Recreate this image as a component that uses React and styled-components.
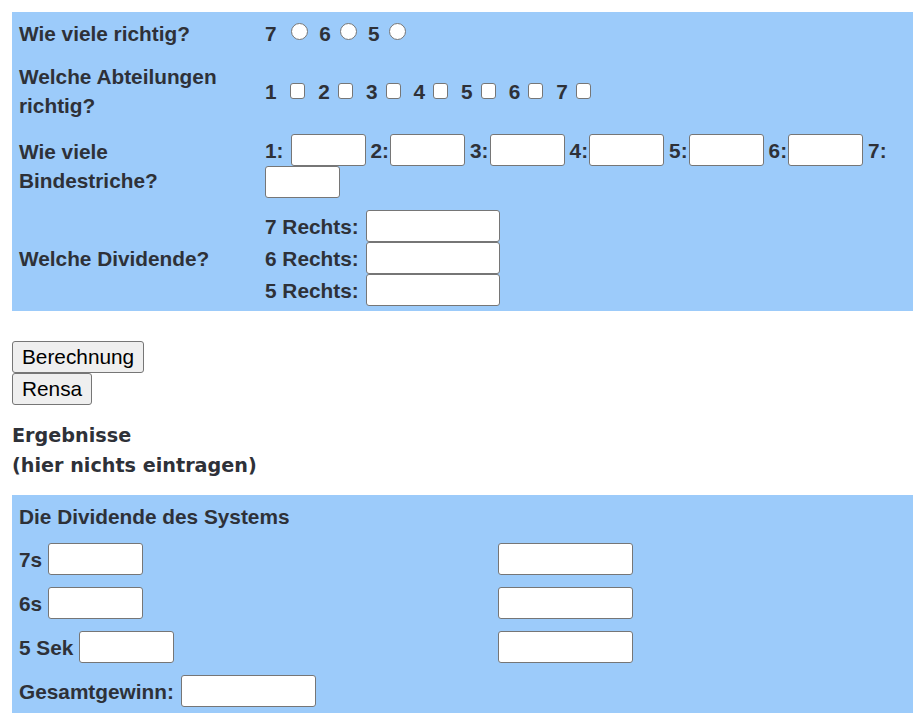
import React from 'react';
import styled, { createGlobalStyle } from 'styled-components';

const GlobalStyle = createGlobalStyle`
  body {
    margin: 0;
    background: #ffffff;
    font-family: 'Liberation Sans', Arial, sans-serif;
    color: #2e3138;
  }
`;

const Page = styled.div`
  padding: 12px;
`;

const Panel = styled.table`
  width: 901px;
  border-collapse: collapse;
  table-layout: fixed;
  background: #9ccbfa;
  font-size: 20.8px;
  font-weight: bold;
`;

const Cell = styled.td`
  padding: ${({ $py = 7 }) => `${$py}px 10px ${$py}px 7px`};
  line-height: 29px;
  vertical-align: middle;
  white-space: ${({ $nowrap }) => ($nowrap ? 'nowrap' : 'normal')};
`;

const Field = styled.input`
  box-sizing: border-box;
  width: ${({ $w }) => $w}px;
  height: 32px;
  margin: 0;
  padding: 1px 4px;
  border: 1px solid #767676;
  border-radius: 3px;
  background: #ffffff;
  font: 16px 'Liberation Sans', Arial, sans-serif;
`;

const Radio = styled.input`
  appearance: none;
  box-sizing: border-box;
  width: 17px;
  height: 17px;
  margin: 0 11px 1px 9px;
  border: 1px solid #767676;
  border-radius: 50%;
  background: #ffffff;
  vertical-align: baseline;
`;

const Box = styled.input`
  appearance: none;
  box-sizing: border-box;
  width: 15px;
  height: 16px;
  margin: 0 13px 0 8px;
  border: 1px solid #767676;
  border-radius: 3px;
  background: #ffffff;
  vertical-align: baseline;
`;

const Wrap = styled.div`
  display: flex;
  flex-wrap: wrap;
  align-items: center;
`;

const Tag = styled.span`
  display: flex;
  align-items: center;
  height: 32px;
  margin: 0 ${({ $right }) => $right}px 0 ${({ $left }) => $left}px;
  white-space: nowrap;
`;

const Pair = styled.label`
  display: flex;
  align-items: center;
  height: ${({ $h = 32 }) => $h}px;
  gap: ${({ $gap = 6 }) => $gap}px;
  white-space: nowrap;
`;

const Actions = styled.div`
  display: flex;
  flex-direction: column;
  align-items: flex-start;
  margin-top: 30px;
`;

const Button = styled.button`
  height: 32px;
  padding: 0 9px;
  border: 1px solid #767676;
  border-radius: 3px;
  background: #efefef;
  color: #000000;
  font: 20.8px 'Liberation Sans', Arial, sans-serif;
`;

const Heading = styled.h3`
  margin: 16px 0 14px;
  font-family: 'DejaVu Sans', Verdana, sans-serif;
  font-size: 19.2px;
  font-weight: bold;
  line-height: 30px;
`;

const hyphens = [1, 2, 3, 4, 5, 6, 7];

export default function App() {
  return (
    <Page>
      <GlobalStyle />
      <Panel>
        <colgroup>
          <col style={{ width: 246 }} />
          <col />
        </colgroup>
        <tbody>
          <tr>
            <Cell>Wie viele richtig?</Cell>
            <Cell $nowrap>
              7 <Radio type="radio" name="rights" />6<Radio type="radio" name="rights" />5
              <Radio type="radio" name="rights" />
            </Cell>
          </tr>
          <tr>
            <Cell>Welche Abteilungen richtig?</Cell>
            <Cell $nowrap>
              1 <Box type="checkbox" />2<Box type="checkbox" />3<Box type="checkbox" />4
              <Box type="checkbox" />5<Box type="checkbox" />6<Box type="checkbox" />7
              <Box type="checkbox" />
            </Cell>
          </tr>
          <tr>
            <Cell>Wie viele Bindestriche?</Cell>
            <Cell>
              <Wrap>
                {hyphens.map((n) => (
                  <React.Fragment key={n}>
                    <Tag $left={n === 1 ? 0 : 5} $right={n === 1 ? 7 : 1}>
                      {n}:
                    </Tag>
                    <Field $w={75} />
                  </React.Fragment>
                ))}
              </Wrap>
            </Cell>
          </tr>
          <tr>
            <Cell $py={5}>Welche Dividende?</Cell>
            <Cell $py={5}>
              {[7, 6, 5].map((n) => (
                <Pair key={n} $gap={7}>
                  {n} Rechts:
                  <Field $w={134} />
                </Pair>
              ))}
            </Cell>
          </tr>
        </tbody>
      </Panel>

      <Actions>
        <Button>Berechnung</Button>
        <Button>Rensa</Button>
      </Actions>

      <Heading>
        Ergebnisse
        <br />
        (hier nichts eintragen)
      </Heading>

      <Panel>
        <colgroup>
          <col style={{ width: 479 }} />
          <col />
        </colgroup>
        <tbody>
          <tr>
            <Cell $py={6} colSpan={2}>
              <Pair $h={30}>Die Dividende des Systems</Pair>
            </Cell>
          </tr>
          {['7s', '6s', '5 Sek'].map((label) => (
            <tr key={label}>
              <Cell $py={6}>
                <Pair>
                  {label}
                  <Field $w={95} />
                </Pair>
              </Cell>
              <Cell $py={6}>
                <Pair>
                  <Field $w={135} />
                </Pair>
              </Cell>
            </tr>
          ))}
          <tr>
            <Cell $py={6}>
              <Pair $gap={7}>
                Gesamtgewinn:
                <Field $w={135} />
              </Pair>
            </Cell>
            <Cell $py={6} />
          </tr>
        </tbody>
      </Panel>
    </Page>
  );
}
